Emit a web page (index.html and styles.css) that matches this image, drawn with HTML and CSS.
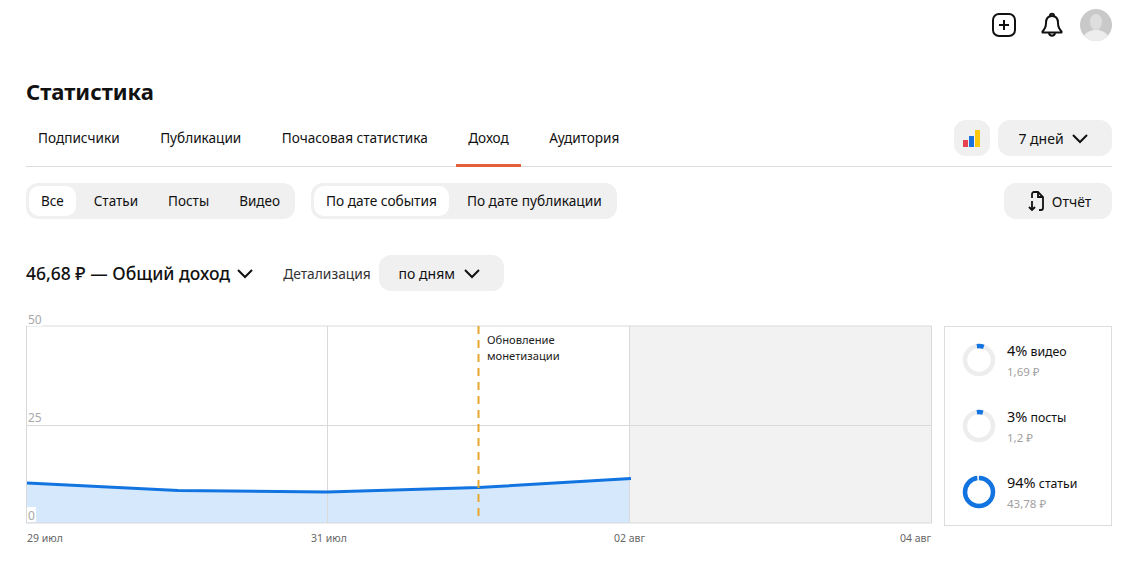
FILE: index.html
```html
<!DOCTYPE html>
<html lang="ru">
<head>
    <meta charset="UTF-8">
    <meta name="viewport" content="width=device-width, initial-scale=1.0">
    <title>Статистика</title>

    <link rel="stylesheet" href="styles.css">
</head>
<body>
    <section class="main">
        <header class="top_bar">
            <svg class="icon_add" width="26" height="26" viewBox="0 0 26 26" fill="none" stroke="#111" stroke-width="2">
                <rect x="2" y="2" width="22" height="22" rx="6"/>
                <path d="M13 8v10M8 13h10"/>
            </svg>
            <svg class="icon_bell" width="24" height="26" viewBox="0 0 24 26" fill="none" stroke="#111" stroke-width="2" stroke-linejoin="round">
                <path d="M12 4c-4 0-6 3-6 7 0 4-1 6-3.500 8.500v1h19v-1C19 17 18 15 18 11c0-4-2-7-6-7z"/>
                <path d="M10 4c0-3 4-3 4 0M9 21c.5 3.500 5.500 3.500 6 0"/>
            </svg>
            <svg class="avatar" width="32" height="32" viewBox="0 0 32 32">
                <circle cx="16" cy="16" r="16" fill="#c9c9c9"/>
                <ellipse cx="16" cy="13" rx="6" ry="8" fill="#dedede"/>
                <path d="M4 27c3-5 7-5 9-6h6c2 1 6 1 9 6-3 3.500-7 5-12 5s-9-1.500-12-5z" fill="#ececec"/>
            </svg>
        </header>

        <h1 class="page_title">Статистика</h1>

        <nav class="tabs">
            <a class="tab">Подписчики</a>
            <a class="tab">Публикации</a>
            <a class="tab">Почасовая статистика</a>
            <a class="tab tab_active">Доход</a>
            <a class="tab">Аудитория</a>
            <span class="tabs_right">
                <button class="btn btn_icon">
                    <svg width="18" height="17" viewBox="0 0 18 17">
                        <rect x="0" y="10" width="5" height="7" fill="#e8414f"/>
                        <rect x="6" y="6" width="5" height="11" fill="#1a73e0"/>
                        <rect x="12" y="0" width="5" height="17" fill="#fcc80e"/>
                    </svg>
                </button>
                <button class="btn btn_period">7 дней
                    <svg class="chevron" width="18" height="11" viewBox="0 0 18 11"><path d="M2 2l7 7 7-7"/></svg>
                </button>
            </span>
        </nav>

        <div class="filters">
            <div class="segment">
                <span class="seg_item seg_active">Все</span>
                <span class="seg_item">Статьи</span>
                <span class="seg_item">Посты</span>
                <span class="seg_item">Видео</span>
            </div>
            <div class="segment segment_date">
                <span class="seg_item seg_active">По дате события</span>
                <span class="seg_item">По дате публикации</span>
            </div>
            <button class="btn btn_report">
                <svg width="16" height="20" viewBox="0 0 16 20" fill="none" stroke="#111" stroke-width="1.800">
                    <path d="M4 7V3a2 2 0 0 1 2-2h4l5 5v11a2 2 0 0 1-2 2h-2"/>
                    <path d="M10 1v5h5"/>
                    <path d="M4 10v9M1 16l3 3 3-3"/>
                </svg>
                Отчёт
            </button>
        </div>

        <div class="summary">
            <span class="total">46,68 ₽ — Общий доход</span>
            <svg class="chevron total_chevron" width="18" height="11" viewBox="0 0 18 11"><path d="M2 2l7 7 7-7"/></svg>
            <span class="detail_label">Детализация</span>
            <button class="btn btn_detail">по дням
                <svg class="chevron" width="18" height="11" viewBox="0 0 18 11"><path d="M2 2l7 7 7-7"/></svg>
            </button>
        </div>

        <div class="chart_row">
            <svg class="chart" width="906" height="240" viewBox="0 0 906 240">
                <rect x="603" y="16" width="302" height="197" fill="#f2f2f2"/>
                <path d="M1 173L152 180.500 301 182 452.500 177.500 603 168.500V213H1z" fill="#d6e9fc"/>
                <path d="M.5 16h905v197H.5zM.5 115.500h905M301.500 16v197M603.500 16v197" fill="none" stroke="#d9d9d9"/>
                <path d="M1 173L152 180.500 301 182 452.500 177.500 605 168.500" fill="none" stroke="#1274e0" stroke-width="3"/>
                <path d="M452.500 16v191" stroke="#e8a72c" stroke-width="2" stroke-dasharray="8 6"/>

                <rect x="1" y="3" width="16" height="13" fill="#fff"/>
                <rect x="1" y="102" width="16" height="13" fill="#fff"/>
                <rect x="1" y="197" width="9" height="15" fill="#fff"/>
                <text class="axis_y" x="2" y="14">50</text>
                <text class="axis_y" x="2" y="112">25</text>
                <text class="axis_y" x="2" y="210">0</text>

                <text class="note" x="461" y="34">Обновление</text>
                <text class="note" x="461" y="50">монетизации</text>

                <text class="axis_x" x="1" y="232">29 июл</text>
                <text class="axis_x" x="303" y="232" text-anchor="middle">31 июл</text>
                <text class="axis_x" x="603.500" y="232" text-anchor="middle">02 авг</text>
                <text class="axis_x" x="905" y="232" text-anchor="end">04 авг</text>
            </svg>

            <div class="legend">
                <div class="legend_row">
                    <svg class="donut" width="34" height="34" viewBox="0 0 34 34">
                        <circle class="donut_bg" cx="17" cy="17" r="14"/>
                        <circle class="donut_val" cx="17" cy="17" r="14" pathLength="100" stroke-dasharray="8 92" stroke-dashoffset="2.500"/>
                    </svg>
                    <div class="legend_text">
                        <div class="legend_title"><b>4%</b> видео</div>
                        <div class="legend_sum">1,69 ₽</div>
                    </div>
                </div>
                <div class="legend_row">
                    <svg class="donut" width="34" height="34" viewBox="0 0 34 34">
                        <circle class="donut_bg" cx="17" cy="17" r="14"/>
                        <circle class="donut_val" cx="17" cy="17" r="14" pathLength="100" stroke-dasharray="7 93" stroke-dashoffset="2.500"/>
                    </svg>
                    <div class="legend_text">
                        <div class="legend_title"><b>3%</b> посты</div>
                        <div class="legend_sum">1,2 ₽</div>
                    </div>
                </div>
                <div class="legend_row">
                    <svg class="donut" width="34" height="34" viewBox="0 0 34 34">
                        <circle class="donut_bg" cx="17" cy="17" r="14"/>
                        <circle class="donut_val" cx="17" cy="17" r="14" pathLength="100" stroke-dasharray="98 2"/>
                    </svg>
                    <div class="legend_text">
                        <div class="legend_title"><b>94%</b> статьи</div>
                        <div class="legend_sum">43,78 ₽</div>
                    </div>
                </div>
            </div>
        </div>
    </section>
</body>
</html>
```

FILE: styles.css
```css
* {
    margin: 0;
    padding: 0;
    box-sizing: border-box;
    font-family: "Noto Sans", "Open Sans", sans-serif;
}

body {
    background: #fff;
    color: #111;
}

.main {
    padding: 0 15px 0 26px;
    overflow: hidden;
}

.top_bar {
    display: flex;
    justify-content: flex-end;
    align-items: center;
    height: 32px;
    margin-top: 9px;
}

.icon_add {
    display: block;
    margin-right: 23px;
}

.icon_bell {
    display: block;
    margin-right: 16px;
}

.avatar {
    display: block;
}

.page_title {
    font-size: 22px;
    line-height: 30px;
    font-weight: 700;
    margin-top: 35px;
}

.tabs {
    display: flex;
    align-items: stretch;
    column-gap: 16.500px;
    height: 47px;
    margin-top: 14px;
    border-bottom: 1px solid #ddd;
}

.tab {
    position: relative;
    padding: 0 12px;
    font-size: 13.600px;
    line-height: 36px;
}

.tab_active::after {
    content: "";
    position: absolute;
    left: 0;
    right: 0;
    bottom: -1px;
    height: 3px;
    background: #e4603a;
}

.tabs_right {
    display: flex;
    column-gap: 8px;
    margin-left: auto;
    height: 36px;
}

.btn {
    display: flex;
    align-items: center;
    justify-content: center;
    height: 36px;
    border: 0;
    border-radius: 12px;
    background: #f0f0f0;
    color: #111;
    font-size: 14px;
}

.btn_icon {
    width: 36px;
}

.btn_period {
    width: 114px;
    padding-right: 3px;
    column-gap: 7px;
}

.chevron {
    display: block;
    fill: none;
    stroke: #111;
    stroke-width: 2;
}

.filters {
    display: flex;
    column-gap: 16px;
    margin-top: 16px;
}

.segment {
    display: flex;
    column-gap: 6px;
    height: 36px;
    padding: 3px;
    border-radius: 12px;
    background: #f0f0f0;
    font-size: 13.500px;
}

.segment_date {
    font-size: 13.700px;
}

.seg_item {
    padding: 0 12px;
    border-radius: 10px;
    line-height: 30px;
}

.seg_active {
    background: #fff;
}

.btn_report {
    width: 108px;
    margin-left: auto;
    padding-left: 3px;
    column-gap: 8px;
}

.summary {
    display: flex;
    align-items: center;
    height: 36px;
    margin-top: 36px;
}

.total {
    font-size: 17.500px;
    font-weight: 500;
}

.total_chevron {
    margin-left: 6px;
}

.detail_label {
    margin-left: 29px;
    font-size: 13.800px;
    color: #333;
}

.btn_detail {
    width: 125px;
    margin-left: 8px;
    padding-right: 3px;
    column-gap: 8px;
}

.chart_row {
    display: flex;
    align-items: flex-start;
    margin-top: 19px;
    column-gap: 12px;
}

.chart {
    display: block;
    flex: none;
}

.axis_y {
    font-size: 12px;
    fill: #a8a8a8;
}

.axis_x {
    font-size: 10.500px;
    fill: #666;
}

.note {
    font-size: 11.200px;
    fill: #222;
}

.legend {
    flex: 1;
    height: 200px;
    margin-top: 16px;
    padding: 0 0 0 17px;
    border: 1px solid #ddd;
}

.legend_row {
    display: flex;
    align-items: center;
    column-gap: 11px;
    height: 66px;
}

.donut {
    display: block;
    transform: rotate(-90deg);
    fill: none;
}

.donut_bg {
    stroke: #ededed;
    stroke-width: 4.500;
}

.donut_val {
    stroke: #1274e0;
    stroke-width: 4.500;
}

.legend_text {
    padding-top: 2px;
}

.legend_title {
    font-size: 12.300px;
    line-height: 20px;
}

.legend_title b {
    font-size: 14.500px;
    font-weight: 400;
}

.legend_sum {
    font-size: 11.500px;
    line-height: 20px;
    color: #a0a0a0;
}
```
